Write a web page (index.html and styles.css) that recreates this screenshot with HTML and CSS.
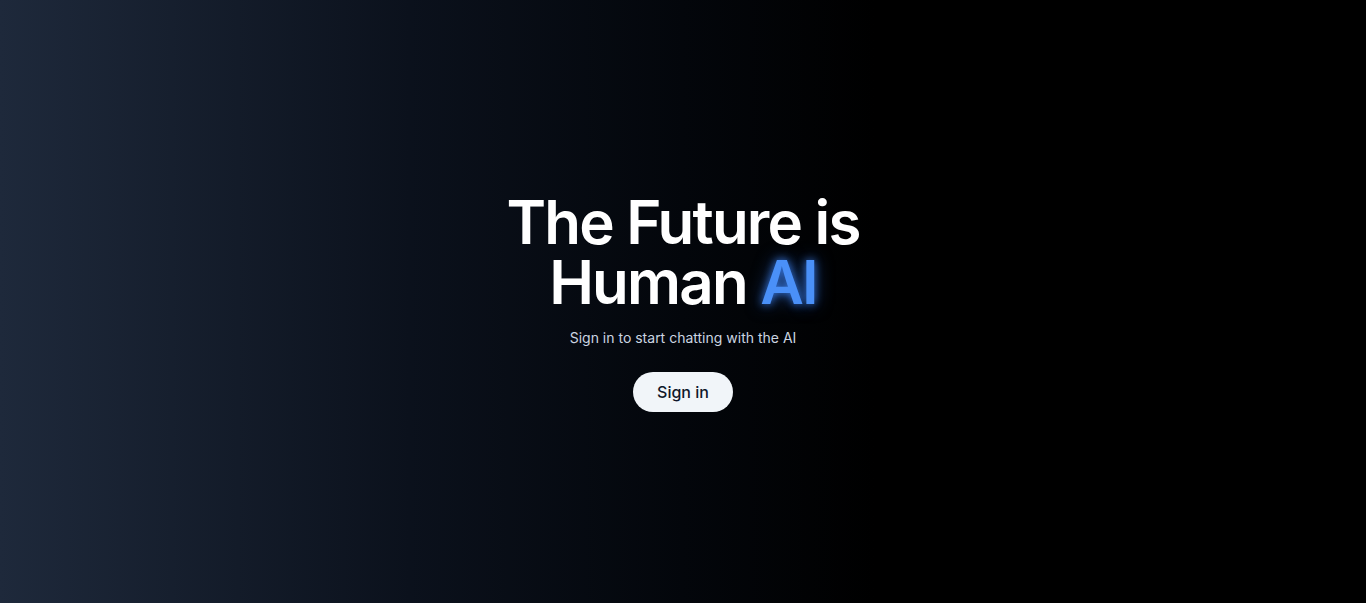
FILE: index.html
```html
<!DOCTYPE html>
<html lang="en">
<head>
<meta charset="utf-8">
<title>The Future is Human AI</title>
<link rel="stylesheet" href="styles.css">
</head>
<body>
<main class="hero">
  <h1 class="title">The Future is<br>Human <span class="glow">AI</span></h1>
  <p class="subtitle">Sign in to start chatting with the AI</p>
  <button class="signin">Sign in</button>
</main>
</body>
</html>
```
FILE: styles.css
```css
html, body {
  margin: 0;
  padding: 0;
  height: 100%;
}
body {
  font-family: Inter, "Liberation Sans", sans-serif;
  background: linear-gradient(to right, #1e293b 0%, #0b111c 30%, #03060b 50%, #000000 64%, #000000 100%);
  color: #fff;
}
.hero {
  height: 100%;
  display: flex;
  flex-direction: column;
  align-items: center;
  justify-content: center;
  text-align: center;
}
.title {
  margin: 0;
  font-size: 60px;
  line-height: 60px;
  font-weight: 600;
  letter-spacing: -0.03em;
  color: #ffffff;
}
.glow {
  color: #4a90f8;
  text-shadow: 0 0 8px rgba(59, 130, 246, 0.9), 0 0 18px rgba(59, 130, 246, 0.5);
}
.subtitle {
  margin: 16px 0 24px;
  font-size: 14px;
  line-height: 20px;
  color: #cbd5e1;
}
.signin {
  height: 40px;
  padding: 0 24px;
  border: none;
  border-radius: 9999px;
  background: #f1f5f9;
  color: #0f172a;
  font-family: Inter, "Liberation Sans", sans-serif;
  font-size: 16px;
  font-weight: 500;
  cursor: pointer;
}
```
